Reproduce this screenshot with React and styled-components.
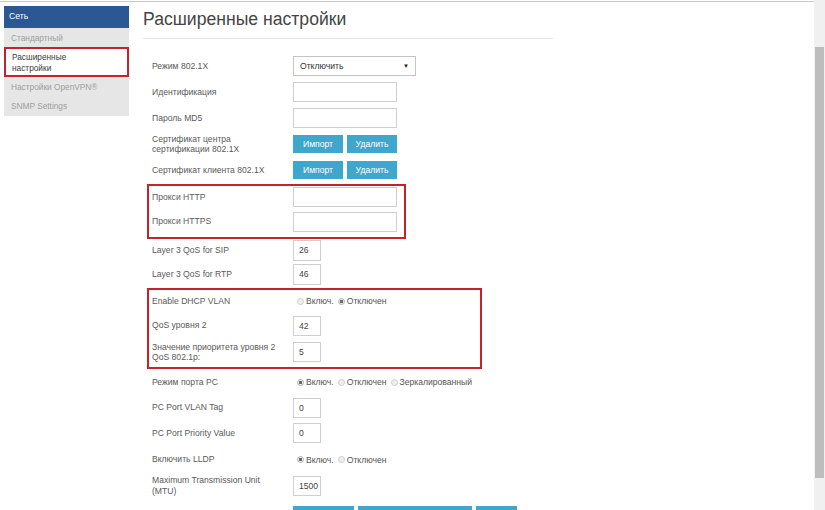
import styled, { createGlobalStyle } from "styled-components";

const GlobalStyle = createGlobalStyle`
  html, body {
    margin: 0;
    padding: 0;
    background: #ffffff;
    overflow: hidden;
  }
  body {
    font-family: "Liberation Sans", Arial, sans-serif;
  }
`;

export default function App() {
  return (
    <>
      <GlobalStyle />
      <Screen>
        <Page>
          <Sidebar>
            <SideHeader>Сеть</SideHeader>
            <SideItem>Стандартный</SideItem>
            <SideItem active>
              Расширенные
              <br />
              настройки
            </SideItem>
            <SideItem>Настройки OpenVPN®</SideItem>
            <SideItem>SNMP Settings</SideItem>
          </Sidebar>

          <Main>
            <Title>Расширенные настройки</Title>
            <Rule />

            <Form>
              <Row h={26}>
                <Label>Режим 802.1X</Label>
                <Select>
                  <span>Отключить</span>
                  <Caret>▼</Caret>
                </Select>
              </Row>
              <Row h={26}>
                <Label>Идентификация</Label>
                <Field w={104} />
              </Row>
              <Row h={26}>
                <Label>Пароль MD5</Label>
                <Field w={104} />
              </Row>
              <Row h={26}>
                <Label>
                  Сертификат центра
                  <br />
                  сертификации 802.1X
                </Label>
                <Buttons>
                  <Btn>Импорт</Btn>
                  <Btn>Удалить</Btn>
                </Buttons>
              </Row>
              <Row h={26}>
                <Label>Сертификат клиента 802.1X</Label>
                <Buttons>
                  <Btn>Импорт</Btn>
                  <Btn>Удалить</Btn>
                </Buttons>
              </Row>

              <Highlight w={259} top={1}>
                <Row h={22}>
                  <Label>Прокси HTTP</Label>
                  <Field w={104} />
                </Row>
                <Row h={27}>
                  <Label>Прокси HTTPS</Label>
                  <Field w={104} />
                </Row>
              </Highlight>

              <Row h={22}>
                <Label>Layer 3 QoS for SIP</Label>
                <Field w={28} tall>26</Field>
              </Row>
              <Row h={27}>
                <Label>Layer 3 QoS for RTP</Label>
                <Field w={28} tall>46</Field>
              </Row>

              <Highlight w={335}>
                <Row h={22}>
                  <Label>Enable DHCP VLAN</Label>
                  <Radios>
                    <Radio />
                    <span>Включ.</span>
                    <Radio checked />
                    <span>Отключен</span>
                  </Radios>
                </Row>
                <Row h={27}>
                  <Label>QoS уровня 2</Label>
                  <Field w={28}>42</Field>
                </Row>
                <Row h={26}>
                  <Label>
                    Значение приоритета уровня 2
                    <br />
                    QoS 802.1p:
                  </Label>
                  <Field w={28}>5</Field>
                </Row>
              </Highlight>

              <Row h={26}>
                <Label>Режим порта PC</Label>
                <Radios>
                  <Radio checked />
                  <span>Включ.</span>
                  <Radio />
                  <span>Отключен</span>
                  <Radio />
                  <span>Зеркалированный</span>
                </Radios>
              </Row>
              <Row h={25}>
                <Label>PC Port VLAN Tag</Label>
                <Field w={28}>0</Field>
              </Row>
              <Row h={26}>
                <Label>PC Port Priority Value</Label>
                <Field w={28}>0</Field>
              </Row>
              <Row h={27}>
                <Label>Включить LLDP</Label>
                <Radios>
                  <Radio checked />
                  <span>Включ.</span>
                  <Radio />
                  <span>Отключен</span>
                </Radios>
              </Row>
              <Row h={25}>
                <Label>
                  Maximum Transmission Unit
                  <br />
                  (MTU)
                </Label>
                <Field w={28}>1500</Field>
              </Row>

              <Footer>
                <Btn w={61}>Сохранить</Btn>
                <Btn w={114}>Сохранить и применить</Btn>
                <Btn w={41}>Сброс</Btn>
              </Footer>
            </Form>
          </Main>
        </Page>

        <ScrollRail>
          <ScrollThumb />
        </ScrollRail>
      </Screen>
    </>
  );
}

const Screen = styled.div`
  display: flex;
  width: 825px;
  height: 510px;
  overflow: hidden;
`;

const Page = styled.div`
  flex: 1;
  display: flex;
  align-items: flex-start;
  margin-top: 1px;
  border-top: 1px solid #c9c9c9;
`;

const Sidebar = styled.div`
  width: 125px;
  margin: 4px 0 0 4px;
  background: #e6e6e6;
  padding-bottom: 1px;
`;

const SideHeader = styled.div`
  height: 22px;
  line-height: 21px;
  padding-left: 5px;
  background: #2b5893;
  color: #ffffff;
  font-size: 8.6px;
`;

const SideItem = styled.div`
  padding: ${(p) => (p.active ? "3px 6px 2px" : "5px 7px 4px")};
  line-height: ${(p) => (p.active ? "10.5px" : "10px")};
  font-size: 8.3px;
  color: ${(p) => (p.active ? "#3a3a3a" : "#9e9e9e")};
  background: ${(p) => (p.active ? "#ffffff" : "transparent")};
  border: ${(p) => (p.active ? "2px solid #c4222c" : "none")};
`;

const Main = styled.div`
  margin-left: 14px;
  width: 410px;
`;

const Title = styled.h1`
  margin: 0;
  padding-top: 6px;
  height: 30px;
  font-size: 17.6px;
  font-weight: normal;
  color: #454545;
  line-height: 22px;
`;

const Rule = styled.div`
  height: 1px;
  background: #e4e4e4;
`;

const Form = styled.div`
  margin-top: 14px;
  padding-left: 9px;
  width: 400px;
`;

const Row = styled.div`
  display: grid;
  grid-template-columns: 141px auto;
  align-items: center;
  height: ${(p) => p.h}px;
`;

const Label = styled.div`
  font-size: 8.6px;
  line-height: 10.5px;
  color: #5a5a5a;
`;

const Field = styled.div`
  box-sizing: border-box;
  width: ${(p) => p.w}px;
  height: ${(p) => (p.tall ? 21 : 20)}px;
  border: 1px solid #cfcfcf;
  background: #ffffff;
  padding-left: 5px;
  font-size: 8.6px;
  line-height: 18px;
  color: #444;
`;

const Select = styled.div`
  box-sizing: border-box;
  width: 123px;
  height: 20px;
  border: 1px solid #c4c4c4;
  padding: 0 6px 0 6px;
  display: flex;
  align-items: center;
  justify-content: space-between;
  font-size: 8.6px;
  color: #333;
`;

const Caret = styled.span`
  font-size: 6px;
  color: #222;
`;

const Buttons = styled.div`
  display: flex;
  gap: 4px;
`;

const Btn = styled.div`
  box-sizing: border-box;
  width: ${(p) => p.w || 50}px;
  height: 18px;
  background: #3fa6cc;
  color: #ffffff;
  font-size: 8.6px;
  line-height: 18px;
  text-align: center;
  white-space: nowrap;
  overflow: hidden;
`;

const Highlight = styled.div`
  width: ${(p) => p.w}px;
  box-sizing: border-box;
  margin: ${(p) => p.top || 0}px 0 0 -5px;
  padding: 0 0 2px 3px;
  border: 2px solid #c4222c;
`;

const Radios = styled.div`
  display: flex;
  align-items: center;
  margin-left: 4px;
  font-size: 8.6px;
  color: #555;

  span {
    margin: 0 4px 0 2px;
  }
`;

const Radio = styled.i`
  box-sizing: border-box;
  width: 7px;
  height: 7px;
  border-radius: 50%;
  border: 1px solid ${(p) => (p.checked ? "#b0b0b0" : "#cdcdcd")};
  background: ${(p) =>
    p.checked
      ? "radial-gradient(circle, #6a6a6a 0 1.4px, #ececec 1.8px)"
      : "#eeeeee"};
`;

const Footer = styled.div`
  display: flex;
  gap: 4px;
  margin: 8px 0 0 141px;

  div {
    padding-top: 2px;
  }
`;

const ScrollRail = styled.div`
  width: 11px;
  background: #f0f0f0;
  padding: 47px 1px 0 1px;
  box-sizing: border-box;
`;

const ScrollThumb = styled.div`
  height: 431px;
  background: #bdbdbd;
`;
